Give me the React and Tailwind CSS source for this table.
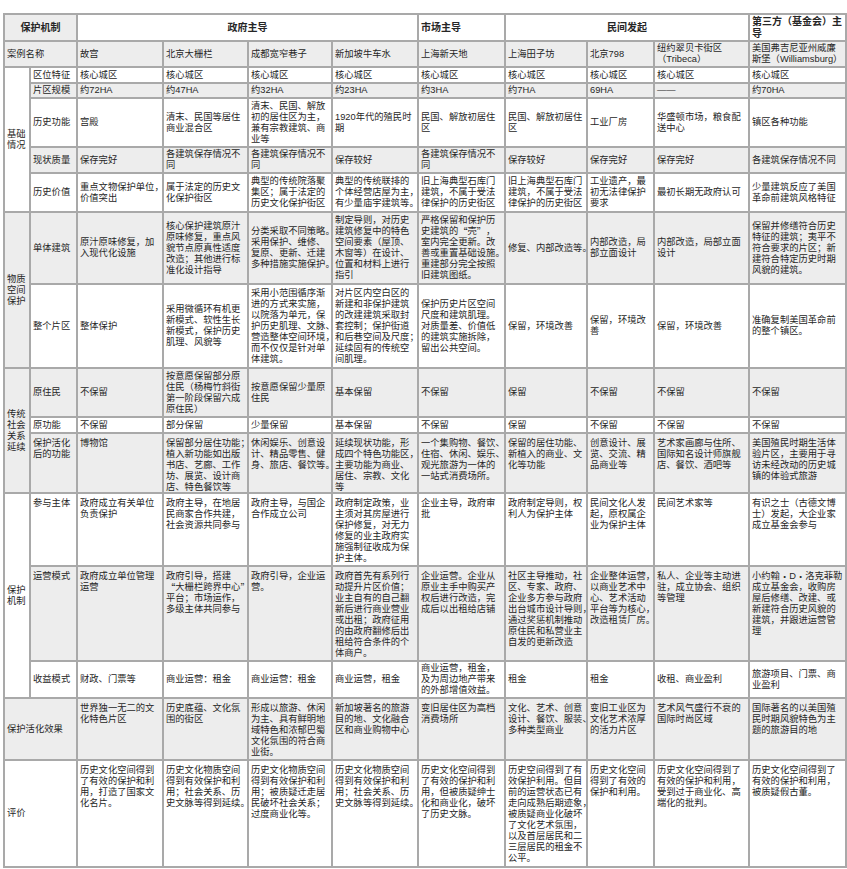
import React from 'react';

const G = 'bg-[#ededed]';
const W = 'bg-white';

const rows = [
  { bg: W, v: 'c', cells: [
    ['保护机制', { cs: 'col-span-2', h: 'c', b: true, bg: G }],
    ['政府主导', { cs: 'col-span-4', h: 'c', b: true }],
    ['市场主导', { b: true }],
    ['民间发起', { cs: 'col-span-3', h: 'c', b: true }],
    ['第三方（基金会）主|导', { b: true }],
  ]},
  { bg: G, v: 'c', cells: [
    ['案例名称', { cs: 'col-span-2' }],
    '故宫', '北京大栅栏', '成都宽窄巷子', '新加坡牛车水', '上海新天地', '上海田子坊', '北京798',
    '纽约翠贝卡街区|（Tribeca）', '美国弗吉尼亚州威廉|斯堡（Williamsburg）',
  ]},
  { bg: W, v: 'c', cells: [
    ['基础|情况', { rs: 'row-span-5', bg: W }],
    '区位特征', '核心城区', '核心城区', '核心城区', '核心城区', '核心城区', '核心城区', '核心城区', '核心城区', '核心城区',
  ]},
  { bg: G, v: 'c', cells: [
    '片区规模', '约72HA', '约47HA', '约32HA', '约23HA', '约3HA', '约7HA', '69HA', '——', '约70HA',
  ]},
  { bg: W, v: 'c', cells: [
    '历史功能', '宫殿', '清末、民国等居住|商业混合区', '清末、民国、解放|初的居住区为主，|兼有宗教建筑、商|业等',
    '1920年代的殖民时|期', '民国、解放初居住|区', '民国、解放初居住|区', '工业厂房', '华盛顿市场，粮食配|送中心', '镇区各种功能',
  ]},
  { bg: G, v: 'c', cells: [
    '现状质量', '保存完好', '各建筑保存情况不|同', '各建筑保存情况不|同', '保存较好', '各建筑保存情况不|同',
    '保存较好', '保存完好', '保存完好', '各建筑保存情况不同',
  ]},
  { bg: W, v: 'c', cells: [
    '历史价值', '重点文物保护单位，|价值突出', '属于法定的历史文|化保护街区', '典型的传统院落聚|集区；属于法定的|历史文化保护街区',
    '典型的传统联排的|个体经营店屋为主，|有少量庙宇建筑等。', '旧上海典型石库门|建筑，不属于受法|律保护的历史街区',
    '旧上海典型石库门|建筑，不属于受法|律保护的历史街区', '工业遗产，最|初无法律保护|要求', '最初长期无政府认可',
    '少量建筑反应了美国|革命前建筑风格特征',
  ]},
  { bg: G, v: 'c', cells: [
    ['物质|空间|保护', { rs: 'row-span-2', bg: G }],
    '单体建筑', '原汁原味修复，加|入现代化设施', '核心保护建筑原汁|原味修复，重点风|貌节点原真性适度|改造；其他进行标|准化设计指导',
    '分类采取不同策略。|采用保护、维修、|复原、更新、迁建|多种措施实施保护。',
    '制定导则，对历史|建筑修复中的特色|空间要素（屋顶、|木窗等）在设计、|位置和材料上进行|指引',
    '严格保留和保护历|史建筑的“壳”，|室内完全更新。改|善或重置基础设施。|重建部分完全按照|旧建筑图纸。',
    '修复、内部改造等。', '内部改造，局|部立面设计', '内部改造，局部立面|设计',
    '保留并修缮符合历史|特征的建筑；夷平不|符合要求的片区；新|建符合特定历史时期|风貌的建筑。',
  ]},
  { bg: W, v: 'c', cells: [
    '整个片区', '整体保护', '采用微循环有机更|新模式、软性生长|新模式，保护历史|肌理、风貌等',
    '采用小范围循序渐|进的方式来实施，|以院落为单元，保|护历史肌理、文脉、|营造整体空间环境，|而不仅仅是针对单|体建筑。',
    '对片区内空白区的|新建和非保护建筑|的改建建筑采取封|套控制；保护街道|和后巷空间及尺度；|延续固有的传统空|间肌理。',
    '保护历史片区空间|尺度和建筑肌理。|对质量差、价值低|的建筑实施拆除，|留出公共空间。',
    '保留，环境改善', '保留，环境改|善', '保留，环境改善', '准确复制美国革命前|的整个镇区。',
  ]},
  { bg: G, v: 'c', cells: [
    ['传统|社会|关系|延续', { rs: 'row-span-3', bg: G }],
    '原住民', '不保留', '按意愿保留部分原|住民（杨梅竹斜街|第一阶段保留六成|原住民）', '按意愿保留少量原|住民',
    '基本保留', '不保留', '保留', '不保留', '不保留', '不保留',
  ]},
  { bg: W, v: 'c', cells: [
    '原功能', '不保留', '部分保留', '少量保留', '基本保留', '不保留', '保留', '不保留', '不保留', '不保留',
  ]},
  { bg: G, v: 't', cells: [
    '保护活化|后的功能', '博物馆', '保留部分居住功能；|植入新功能如出版|书店、艺廊、工作|坊、展览、设计商|店、特色餐饮等',
    '休闲娱乐、创意设|计、精品零售、健|身、旅店、餐饮等。', '延续现状功能，形|成四个特色功能区，|主要功能为商业、|居住、宗教、文化|等',
    '一个集购物、餐饮、|住宿、休闲、娱乐、|观光旅游为一体的|一站式消费场所。', '保留的居住功能、|新植入的商业、文|化等功能',
    '创意设计、展|览、交流、精|品商业等', '艺术家画廊与住所、|国际知名设计师旗舰|店、餐饮、酒吧等',
    '美国殖民时期生活体|验片区，主要用于寻|访未经改动的历史城|镇的体验式旅游',
  ]},
  { bg: W, v: 't', cells: [
    ['保护|机制', { rs: 'row-span-3', bg: W, v: 'c' }],
    '参与主体', '政府成立有关单位|负责保护', '政府主导，在地居|民商家合作共建，|社会资源共同参与', '政府主导，与国企|合作成立公司',
    '政府制定政策，业|主须对其房屋进行|保护修复，对无力|修复的业主政府实|施强制征收成为保|护主体。',
    '企业主导，政府审|批', '政府制定导则，权|利人为保护主体', '民间文化人发|起，原权属企|业为保护主体', '民间艺术家等',
    '有识之士（古德文博|士）发起，大企业家|成立基金会参与',
  ]},
  { bg: G, v: 't', cells: [
    '运营模式', '政府成立单位管理|运营', '政府引导，搭建|“大栅栏跨界中心”|平台；市场运作，|多级主体共同参与', '政府引导，企业运|营。',
    '政府首先有系列行|动提升片区价值；|业主自有的自己翻|新后进行商业营业|或出租；政府征用|的由政府翻修后出|租给符合条件的个|体商户。',
    '企业运营。企业从|原业主手中购买产|权后进行改造，完|成后以出租给店铺',
    '社区主导推动，社|区、专家、政府、|企业多方参与政府|出台城市设计导则，|通过奖惩机制推动|原住民和私营业主|自发的更新改造',
    '企业整体运营，|以商业艺术中|心、艺术活动|平台等为核心，|改造租赁厂房。', '私人、企业等主动进|驻，成立协会、组织|等管理',
    '小约翰·D·洛克菲勒|成立基金会，收购房|屋后修缮、改建、或|新建符合历史风貌的|建筑，并跟进运营管|理',
  ]},
  { bg: W, v: 'c', cells: [
    '收益模式', '财政、门票等', '商业运营：租金', '商业运营：租金', '商业运营，租金', '商业运营，租金，|及为周边地产带来|的外部增值效益。',
    '租金', '租金', '收租、商业盈利', '旅游项目、门票、商|业盈利',
  ]},
  { bg: G, v: 't', cells: [
    ['保护活化效果', { cs: 'col-span-2', v: 'c' }],
    '世界独一无二的文|化特色片区', '历史底蕴、文化氛|围的街区', '形成以旅游、休闲|为主、具有鲜明地|域特色和浓郁巴蜀|文化氛围的符合商|业街。',
    '新加坡著名的旅游|目的地、文化融合|区和商业购物中心', '变旧居住区为高档|消费场所', '文化、艺术、创意|设计、餐饮、服装、|多种类型商业',
    '变旧工业区为|文化艺术浓厚|的活力片区', '艺术风气盛行不衰的|国际时尚区域', '国际著名的以美国殖|民时期风貌特色为主|题的旅游目的地',
  ]},
  { bg: W, v: 't', cells: [
    ['评价', { cs: 'col-span-2', v: 'c' }],
    '历史文化空间得到|了有效的保护和利|用，打造了国家文|化名片。', '历史文化物质空间|得到有效保护和利|用；社会关系、历|史文脉等得到延续。',
    '历史文化物质空间|得到有效保护和利|用；被质疑迁走居|民破坏社会关系；|过度商业化等。', '历史文化物质空间|得到有效保护和利|用；社会关系、历|史文脉等得到延续。',
    '历史文化空间得到|了有效的保护和利|用，但被质疑绅士|化和商业化，破坏|了历史文脉。',
    '历史空间得到了有|效保护利用。但目|前的运营状态已有|走向成熟后期迹象，|被质疑商业化破坏|了文化艺术氛围，|以及首层居民和二|三层居民的租金不|公平。',
    '历史文化空间|得到了有效的|保护和利用。', '历史文化空间得到了|有效的保护和利用，|受到过于商业化、高|端化的批判。',
    '历史文化空间得到了|有效的保护和利用，|被质疑假古董。',
  ]},
];

function Line({ text }) {
  const parts = text.split(/([“”·])/);
  return (
    <div>
      {parts.map((p, i) =>
        /^[“”·]$/.test(p) ? (
          <span key={i} className="inline-block w-[9.3px] text-center font-['Noto_Sans_CJK_SC',sans-serif] leading-[11px] h-[11px] align-top">{p}</span>
        ) : (
          <React.Fragment key={i}>{p}</React.Fragment>
        )
      )}
    </div>
  );
}

function Cell({ text, bg, v, h, b, cs, rs }) {
  const lines = text.split('|');
  const cls = [
    'flex px-[2px] whitespace-nowrap',
    bg,
    v === 't' ? 'items-start pt-[4px]' : 'items-center',
    h === 'c' ? 'justify-center text-center' : 'justify-start',
    b ? 'font-bold text-[10px] leading-[12px]' : '',
    cs || '',
    rs || '',
  ].join(' ');
  return (
    <div className={cls}>
      <div>
        {lines.map((l, i) => (
          <Line key={i} text={l} />
        ))}
      </div>
    </div>
  );
}

export default function App() {
  const cells = [];
  rows.forEach((row, ri) => {
    row.cells.forEach((c, ci) => {
      const [text, opts] = typeof c === 'string' ? [c, {}] : c;
      cells.push(
        <Cell
          key={ri + '-' + ci}
          text={text}
          bg={opts.bg || row.bg}
          v={opts.v || row.v}
          h={opts.h}
          b={opts.b}
          cs={opts.cs}
          rs={opts.rs}
        />
      );
    });
  });
  return (
    <div className="w-[847px] h-[869px] bg-white overflow-hidden pt-[13px] pl-[3px]">
      <div className="grid w-fit gap-[2px] p-[2px] bg-[#a9a9a9] text-[9.3px] leading-[11px] text-[#262626] font-['Liberation_Sans','Noto_Sans_CJK_SC',sans-serif] grid-cols-[24px_45px_84px_83px_82px_84px_85px_80px_65px_93px_95px] grid-rows-[25px_24px_14px_13px_47px_24px_37px_70px_82px_47px_14px_58px_71px_93px_35px_60px_105px]">
        {cells}
      </div>
    </div>
  );
}
